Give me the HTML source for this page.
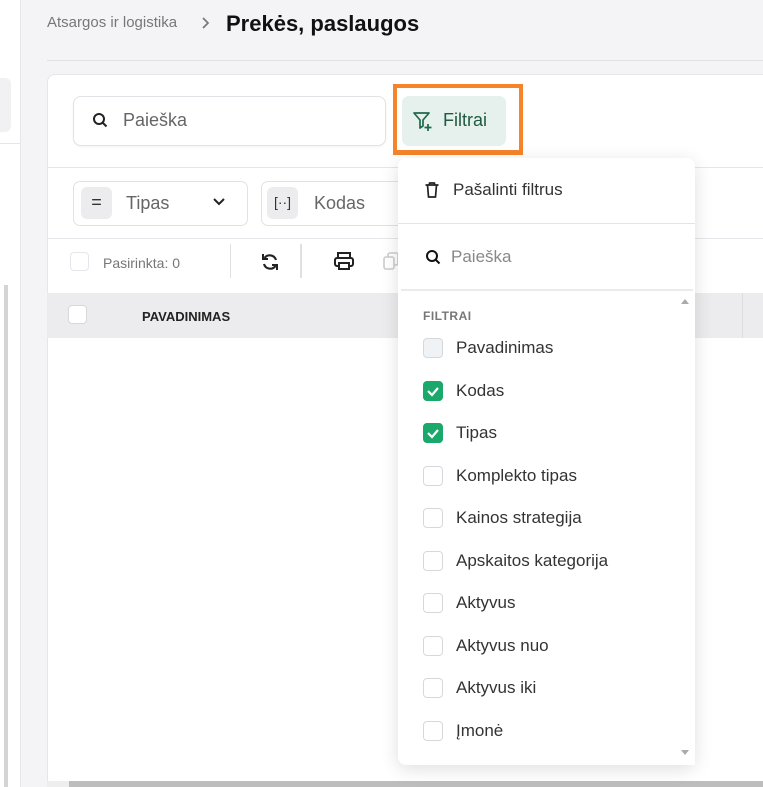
<!DOCTYPE html>
<html><head><meta charset="utf-8"><style>
*{box-sizing:border-box;margin:0;padding:0}
body{width:763px;height:787px;overflow:hidden;background:#f4f4f6;font-family:"Liberation Sans",sans-serif;position:relative;color:#222}
.a{position:absolute}
.cb{position:absolute;width:20px;height:20px;border:1px solid #d6d8dc;border-radius:4px;background:#fff}
.cb.on{background:#1aa86b;border-color:#1aa86b}
.it{position:absolute;left:456px;font-size:17px;color:#333}
</style></head><body>
<div class="a" style="left:0;top:0;width:21px;height:787px;background:#fff;border-right:1px solid #e6e6ea"></div>
<div class="a" style="left:0;top:78px;width:11px;height:54px;background:#f1f1f4;border-radius:0 6px 6px 0"></div>
<div class="a" style="left:0;top:143px;width:21px;height:1px;background:#e6e6ea"></div>
<div class="a" style="left:4px;top:285px;width:4px;height:502px;background:#d4d4d4"></div>
<div class="a" style="left:47px;top:60px;width:716px;height:1px;background:#e2e2e6"></div>
<div class="a" style="left:47px;top:14px;font-size:15px;color:#777">Atsargos ir logistika</div>
<svg class="a" style="left:201px;top:16px" width="10" height="14"><path d="M2 2l5 5-5 5" fill="none" stroke="#777" stroke-width="1.7"/></svg>
<div class="a" style="left:226px;top:11px;font-size:22px;font-weight:bold;color:#111">Prekės, paslaugos</div>
<div class="a" style="left:47px;top:74px;width:730px;height:713px;background:#fff;border:1px solid #e6e6ea;border-radius:8px"></div>
<div class="a" style="left:73px;top:96px;width:313px;height:50px;border:1px solid #e2e2e6;border-radius:8px;background:#fff;box-shadow:0 1px 2px rgba(0,0,0,.05)"></div>
<svg class="a" style="left:92px;top:112px" width="16" height="16" viewBox="0 0 16 16"><circle cx="7" cy="7" r="5" fill="none" stroke="#222" stroke-width="2"/><path d="M11 11l3.5 3.5" stroke="#222" stroke-width="2"/></svg>
<div class="a" style="left:123px;top:110px;font-size:18px;color:#666">Paieška</div>
<div class="a" style="left:393px;top:84px;width:130px;height:71px;border:4px solid #f5842a;border-bottom-width:5px"></div>
<div class="a" style="left:402px;top:96px;width:104px;height:50px;background:#e6f1ed;border-radius:7px"></div>
<svg class="a" style="left:412px;top:110px" width="22" height="22" viewBox="0 0 22 22"><path d="M2 3h15l-6 7v6l-3 2v-8z" fill="none" stroke="#1f6a4a" stroke-width="1.7" stroke-linejoin="round"/><path d="M16 14v7M12.5 17.5h7" stroke="#1f6a4a" stroke-width="1.7"/></svg>
<div class="a" style="left:443px;top:110px;font-size:18px;color:#1f5a42">Filtrai</div>
<div class="a" style="left:47px;top:167px;width:716px;height:1px;background:#e6e6ea"></div>
<div class="a" style="left:73px;top:181px;width:175px;height:45px;border:1px solid #e2e2e6;border-radius:7px"></div>
<div class="a" style="left:81px;top:187px;width:31px;height:32px;background:#ececee;border-radius:6px;text-align:center;line-height:30px;font-size:18px;color:#333">=</div>
<div class="a" style="left:126px;top:193px;font-size:18px;color:#666">Tipas</div>
<svg class="a" style="left:212px;top:197px" width="14" height="10"><path d="M2 2l5 5 5-5" fill="none" stroke="#222" stroke-width="2"/></svg>
<div class="a" style="left:261px;top:181px;width:150px;height:45px;border:1px solid #e2e2e6;border-radius:7px"></div>
<div class="a" style="left:267px;top:187px;width:31px;height:32px;background:#ececee;border-radius:6px;text-align:center;line-height:30px;font-size:14px;color:#333">[··]</div>
<div class="a" style="left:314px;top:193px;font-size:18px;color:#666">Kodas</div>
<div class="a" style="left:47px;top:238px;width:716px;height:1px;background:#e6e6ea"></div>
<div class="cb" style="left:70px;top:252px;width:19px;height:19px;border-color:#e6e6ea"></div>
<div class="a" style="left:103px;top:255px;font-size:14px;color:#777">Pasirinkta: 0</div>
<div class="a" style="left:230px;top:244px;width:1px;height:34px;background:#e0e0e4"></div>
<svg class="a" style="left:260px;top:252px" width="20" height="20" viewBox="0 0 20 20"><path d="M16 8A6.5 6.5 0 0 0 4.5 6M4 12a6.5 6.5 0 0 0 11.5 2" fill="none" stroke="#222" stroke-width="2.2"/><path d="M3 2v5h5M17 18v-5h-5" fill="none" stroke="#222" stroke-width="2"/></svg>
<div class="a" style="left:300px;top:244px;width:2px;height:34px;background:#e0e0e4"></div>
<svg class="a" style="left:333px;top:251px" width="22" height="20" viewBox="0 0 22 20"><rect x="5" y="2" width="12" height="5" fill="none" stroke="#222" stroke-width="2"/><rect x="2" y="7" width="18" height="8" rx="2" fill="none" stroke="#222" stroke-width="2"/><rect x="6" y="12" width="10" height="6" fill="#fff" stroke="#222" stroke-width="2"/></svg>
<svg class="a" style="left:382px;top:250px" width="18" height="20"><rect x="6" y="3" width="10" height="12" rx="2" fill="none" stroke="#ccc" stroke-width="1.6"/><rect x="2" y="7" width="10" height="12" rx="2" fill="#fff" stroke="#ccc" stroke-width="1.6"/></svg>
<div class="a" style="left:47px;top:293px;width:716px;height:45px;background:#ececee"></div>
<div class="a" style="left:742px;top:293px;width:1px;height:45px;background:#ddd"></div>
<div class="cb" style="left:68px;top:305px;width:19px;height:19px"></div>
<div class="a" style="left:142px;top:309px;font-size:13px;font-weight:bold;color:#222">PAVADINIMAS</div>
<div class="a" style="left:47px;top:781px;width:716px;height:6px;background:#eee"></div>
<div class="a" style="left:69px;top:781px;width:694px;height:6px;background:#bdbdbd"></div>
<div class="a" style="left:398px;top:158px;width:297px;height:607px;background:#fff;border-radius:8px;box-shadow:0 4px 18px rgba(0,0,0,.13)"></div>
<svg class="a" style="left:424px;top:181px" width="16" height="18" viewBox="0 0 16 18"><path d="M1.5 4h13M5.5 4V2h5v2M3.5 4l1 12h7l1-12" fill="none" stroke="#222" stroke-width="1.7" stroke-linejoin="round"/></svg>
<div class="it" style="left:453px;top:180px">Pašalinti filtrus</div>
<div class="a" style="left:398px;top:223px;width:297px;height:1px;background:#e4e4e8"></div>
<svg class="a" style="left:425px;top:249px" width="16" height="16" viewBox="0 0 16 16"><circle cx="7" cy="7" r="5" fill="none" stroke="#111" stroke-width="2"/><path d="M11 11l3.5 3.5" stroke="#111" stroke-width="2"/></svg>
<div class="it" style="left:451px;top:247px;color:#888">Paieška</div>
<div class="a" style="left:401px;top:289px;width:292px;height:2px;background:#ebebee"></div>
<div class="a" style="left:674px;top:291px;width:21px;height:474px;background:#fff"></div>
<div class="a" style="left:681px;top:299px;width:0;height:0;border:4px solid transparent;border-bottom:5px solid #aaa;border-top:0"></div>
<div class="a" style="left:681px;top:750px;width:0;height:0;border:4px solid transparent;border-top:5px solid #aaa;border-bottom:0"></div>
<div class="a" style="left:423px;top:309px;font-size:12px;font-weight:bold;color:#777;letter-spacing:.5px">FILTRAI</div>
<div class="cb" style="left:423px;top:338px;background:#f0f3f6"></div><div class="it" style="top:338px">Pavadinimas</div>
<div class="cb on" style="left:423px;top:381px"><svg width="18" height="18"><path d="M4 9l4 4 6-7" fill="none" stroke="#fff" stroke-width="2.2"/></svg></div><div class="it" style="top:381px">Kodas</div>
<div class="cb on" style="left:423px;top:423px"><svg width="18" height="18"><path d="M4 9l4 4 6-7" fill="none" stroke="#fff" stroke-width="2.2"/></svg></div><div class="it" style="top:423px">Tipas</div>
<div class="cb" style="left:423px;top:466px"></div><div class="it" style="top:466px">Komplekto tipas</div>
<div class="cb" style="left:423px;top:508px"></div><div class="it" style="top:508px">Kainos strategija</div>
<div class="cb" style="left:423px;top:551px"></div><div class="it" style="top:551px">Apskaitos kategorija</div>
<div class="cb" style="left:423px;top:593px"></div><div class="it" style="top:593px">Aktyvus</div>
<div class="cb" style="left:423px;top:636px"></div><div class="it" style="top:636px">Aktyvus nuo</div>
<div class="cb" style="left:423px;top:678px"></div><div class="it" style="top:678px">Aktyvus iki</div>
<div class="cb" style="left:423px;top:721px"></div><div class="it" style="top:721px">Įmonė</div>
</body></html>
